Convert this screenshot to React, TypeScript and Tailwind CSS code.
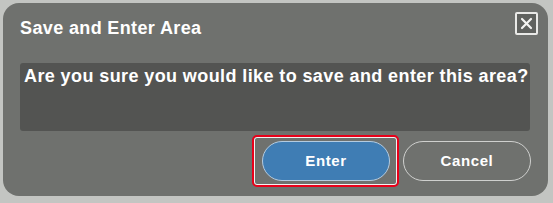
import React from "react";

export default function App() {
  return (
    <div
      className="w-[553px] h-[203px] bg-[#c3c5c2] pt-[3px] pl-[3px] pr-[5px] pb-[7px]"
      style={{ fontFamily: '"Liberation Sans", Arial, sans-serif' }}
    >
      <div className="h-full w-full rounded-[16px] bg-[#6f716e] flex flex-col pl-[17px] pr-[18px]">
        <div className="flex items-start justify-between h-[60px]">
          <div className="mt-[13px] text-[18px] leading-[24px] font-bold text-white tracking-[0.37px]">
            Save and Enter Area
          </div>
          <div className="mt-[9px] mr-[-8px] w-[23px] h-[23px] border-2 border-[#e9e9e7] rounded-[2px] bg-[#60625f] flex items-center justify-center">
            <svg width="13" height="13" viewBox="0 0 13 13">
              <path
                d="M2 2 L11 11 M11 2 L2 11"
                stroke="#f4f4f2"
                strokeWidth="2.2"
                strokeLinecap="round"
              />
            </svg>
          </div>
        </div>
        <div className="h-[68px] rounded-[3px] bg-[#535452] pl-[4px] pt-[1px] text-[18px] leading-[24px] font-bold text-white tracking-[0.4px]">
          Are you sure you would like to save and enter this area?
        </div>
        <div className="flex justify-end items-center gap-[13px] mt-[10px] mr-[-1px]">
          <div className="relative">
            <div className="absolute left-[-10px] right-[-9px] top-[-6px] bottom-[-6px] rounded-[5px] border-2 border-[#e8001a]">
              <div className="h-full w-full rounded-[3px] border border-white/90"></div>
            </div>
            <button className="relative w-[128px] h-[40px] rounded-full bg-[#3f7db4] border-[1.5px] border-[#b3cbe0] text-white font-bold text-[15px] tracking-[0.6px]">
              Enter
            </button>
          </div>
          <button className="w-[128px] h-[40px] rounded-full border-[1.5px] border-[#cfd0ce] text-white font-bold text-[15px] tracking-[0.6px]">
            Cancel
          </button>
        </div>
      </div>
    </div>
  );
}
